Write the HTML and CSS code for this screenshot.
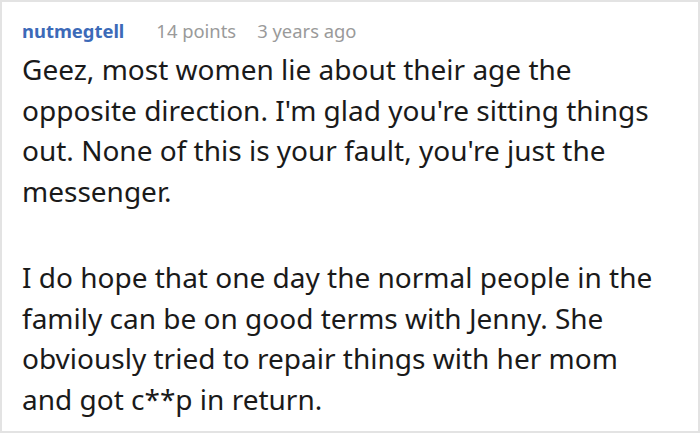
FILE: index.html
```html
<!DOCTYPE html>
<html>
<head>
<meta charset="utf-8">
<link rel="stylesheet" href="styles.css">
</head>
<body>
<div class="comment">
  <div class="meta">
    <span class="author">nutmegtell</span>
    <span class="info">14 points</span>
    <span class="info">3 years ago</span>
  </div>
  <div class="text">
    <p>Geez, most women lie about their age the opposite direction. I'm glad you're sitting things out. None of this is your fault, you're just the messenger.</p>
    <p>I do hope that one day the normal people in the family can be on good terms with Jenny. She obviously tried to repair things with her mom and got c**p in return.</p>
  </div>
</div>
</body>
</html>
```
FILE: styles.css
```css
html, body {
  margin: 0;
  padding: 0;
  background: #fff;
}
.comment {
  box-sizing: border-box;
  width: 700px;
  height: 433px;
  border: 2px solid #e3e3e3;
  padding: 16px 36px 0 20px;
  font-family: "Noto Sans", sans-serif;
  overflow: hidden;
}
.meta {
  display: flex;
  gap: 21px;
  align-items: baseline;
  font-size: 18.4px;
  line-height: 26px;
}
.author {
  color: #3c6ab8;
  font-weight: bold;
  margin-right: 11px;
}
.info {
  color: #9a9a9a;
}
.text {
  font-size: 28px;
  line-height: 40.5px;
  color: #1a1a1a;
  margin-top: 5px;
}
.text p {
  margin: 0 0 46px 0;
}
```
